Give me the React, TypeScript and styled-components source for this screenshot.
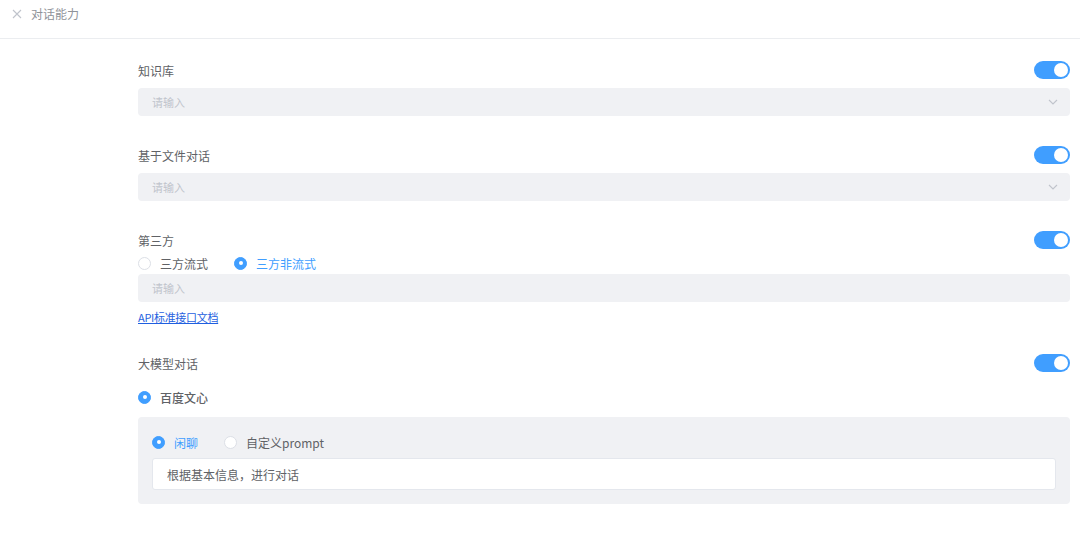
import { useState } from "react";
import styled, { createGlobalStyle } from "styled-components";

const GlobalStyle = createGlobalStyle`
  html, body {
    margin: 0;
    padding: 0;
    background: #ffffff;
  }
  body {
    font-family: "Noto Sans CJK SC", "Noto Sans", "Liberation Sans", sans-serif;
    color: #606266;
  }
`;

const Page = styled.div`
  width: 1080px;
  min-height: 544px;
  background: #fff;
`;

const Header = styled.div`
  height: 39px;
  display: flex;
  align-items: flex-start;
  gap: 8px;
  padding: 6px 0 0 11px;
  box-sizing: border-box;
  border-bottom: 1px solid #ebedf0;
`;

const CloseButton = styled.span`
  width: 12px;
  height: 16px;
  display: flex;
  align-items: center;
  justify-content: center;
  color: #c0c4cc;
`;

const Title = styled.div`
  font-size: 12px;
  line-height: 16px;
  color: #909399;
`;

const Body = styled.div`
  padding: 21px 10px 0 138px;
  display: flex;
  flex-direction: column;
`;

const Section = styled.div<{ $gap?: number }>`
  display: flex;
  flex-direction: column;
  margin-bottom: ${(p) => p.$gap ?? 29}px;
`;

const LabelRow = styled.div`
  height: 20px;
  display: flex;
  align-items: center;
  justify-content: space-between;
`;

const Label = styled.span`
  font-size: 12px;
  color: #606266;
`;

const Track = styled.button<{ $on: boolean }>`
  width: 36px;
  height: 18px;
  border-radius: 9px;
  border: none;
  padding: 0;
  cursor: pointer;
  position: relative;
  background: ${(p) => (p.$on ? "#409eff" : "#dcdfe6")};
`;

const Knob = styled.span<{ $on: boolean }>`
  position: absolute;
  top: 2px;
  left: ${(p) => (p.$on ? "20px" : "2px")};
  width: 14px;
  height: 14px;
  border-radius: 50%;
  background: #fff;
`;

const Select = styled.div<{ $top?: number }>`
  margin-top: ${(p) => p.$top ?? 8}px;
  height: 28px;
  border-radius: 4px;
  background: #f0f1f4;
  display: flex;
  align-items: center;
  justify-content: space-between;
  padding: 0 11px 0 14px;
  box-sizing: border-box;
`;

const Placeholder = styled.span`
  font-size: 11px;
  color: #c0c4cc;
`;

const RadioRow = styled.div<{ $top?: number; $gap?: number }>`
  margin-top: ${(p) => p.$top ?? 0}px;
  height: 20px;
  display: flex;
  align-items: center;
  gap: ${(p) => p.$gap ?? 26}px;
`;

const RadioItem = styled.label<{ $checked: boolean; $strong?: boolean }>`
  display: flex;
  align-items: center;
  gap: 9px;
  font-size: 12px;
  cursor: pointer;
  color: ${(p) => (p.$checked && !p.$strong ? "#409eff" : "#606266")};
  font-weight: ${(p) => (p.$strong ? 500 : 400)};
`;

const Dot = styled.span<{ $checked: boolean }>`
  width: 13px;
  height: 13px;
  border-radius: 50%;
  box-sizing: border-box;
  border: 1px solid ${(p) => (p.$checked ? "#409eff" : "#dcdfe6")};
  background: ${(p) => (p.$checked ? "#409eff" : "#fff")};
  display: flex;
  align-items: center;
  justify-content: center;
  &::after {
    content: "";
    width: 4px;
    height: 4px;
    border-radius: 50%;
    background: #fff;
    display: ${(p) => (p.$checked ? "block" : "none")};
  }
`;

const DocLink = styled.a`
  margin-top: 6px;
  font-size: 11px;
  line-height: 18px;
  letter-spacing: -0.3px;
  color: #1f5fe0;
  text-decoration: underline;
  align-self: flex-start;
`;

const Panel = styled.div`
  margin-top: 10px;
  background: #f0f1f4;
  border-radius: 4px;
  padding: 15px 14px 14px;
  display: flex;
  flex-direction: column;
  gap: 6px;
`;

const TextInput = styled.div`
  height: 32px;
  border: 1px solid #e4e7ed;
  border-radius: 3px;
  background: #fff;
  box-sizing: border-box;
  display: flex;
  align-items: center;
  padding: 0 14px;
  font-size: 12px;
  color: #606266;
`;

const Chevron = () => (
  <svg width="12" height="12" viewBox="0 0 12 12" fill="none">
    <path d="M2 4l4 4 4-4" stroke="#c0c4cc" strokeWidth="1.1" />
  </svg>
);

const Switch = ({ on, onClick }: { on: boolean; onClick: () => void }) => (
  <Track $on={on} onClick={onClick}>
    <Knob $on={on} />
  </Track>
);

const Radio = ({
  checked,
  strong,
  children,
  onClick,
}: {
  checked: boolean;
  strong?: boolean;
  children: React.ReactNode;
  onClick: () => void;
}) => (
  <RadioItem $checked={checked} $strong={strong} onClick={onClick}>
    <Dot $checked={checked} />
    {children}
  </RadioItem>
);

export default function App() {
  const [toggles, setToggles] = useState([true, true, true, true]);
  const [mode, setMode] = useState(1);
  const [prompt, setPrompt] = useState(0);

  const flip = (i: number) =>
    setToggles((t) => t.map((v, idx) => (idx === i ? !v : v)));

  return (
    <Page>
      <GlobalStyle />
      <Header>
        <CloseButton>
          <svg width="10" height="10" viewBox="0 0 10 10">
            <path d="M1 1l8 8M9 1l-8 8" stroke="#c0c4cc" strokeWidth="1.1" />
          </svg>
        </CloseButton>
        <Title>对话能力</Title>
      </Header>
      <Body>
        <Section>
          <LabelRow>
            <Label>知识库</Label>
            <Switch on={toggles[0]} onClick={() => flip(0)} />
          </LabelRow>
          <Select>
            <Placeholder>请输入</Placeholder>
            <Chevron />
          </Select>
        </Section>

        <Section>
          <LabelRow>
            <Label>基于文件对话</Label>
            <Switch on={toggles[1]} onClick={() => flip(1)} />
          </LabelRow>
          <Select>
            <Placeholder>请输入</Placeholder>
            <Chevron />
          </Select>
        </Section>

        <Section $gap={27}>
          <LabelRow>
            <Label>第三方</Label>
            <Switch on={toggles[2]} onClick={() => flip(2)} />
          </LabelRow>
          <RadioRow $top={3}>
            <Radio checked={mode === 0} onClick={() => setMode(0)}>
              三方流式
            </Radio>
            <Radio checked={mode === 1} onClick={() => setMode(1)}>
              三方非流式
            </Radio>
          </RadioRow>
          <Select $top={1}>
            <Placeholder>请输入</Placeholder>
          </Select>
          <DocLink href="#">API标准接口文档</DocLink>
        </Section>

        <Section>
          <LabelRow>
            <Label>大模型对话</Label>
            <Switch on={toggles[3]} onClick={() => flip(3)} />
          </LabelRow>
          <RadioRow $top={14}>
            <Radio checked strong onClick={() => undefined}>
              百度文心
            </Radio>
          </RadioRow>
          <Panel>
            <RadioRow>
              <Radio checked={prompt === 0} onClick={() => setPrompt(0)}>
                闲聊
              </Radio>
              <Radio checked={prompt === 1} onClick={() => setPrompt(1)}>
                自定义prompt
              </Radio>
            </RadioRow>
            <TextInput>根据基本信息，进行对话</TextInput>
          </Panel>
        </Section>
      </Body>
    </Page>
  );
}
